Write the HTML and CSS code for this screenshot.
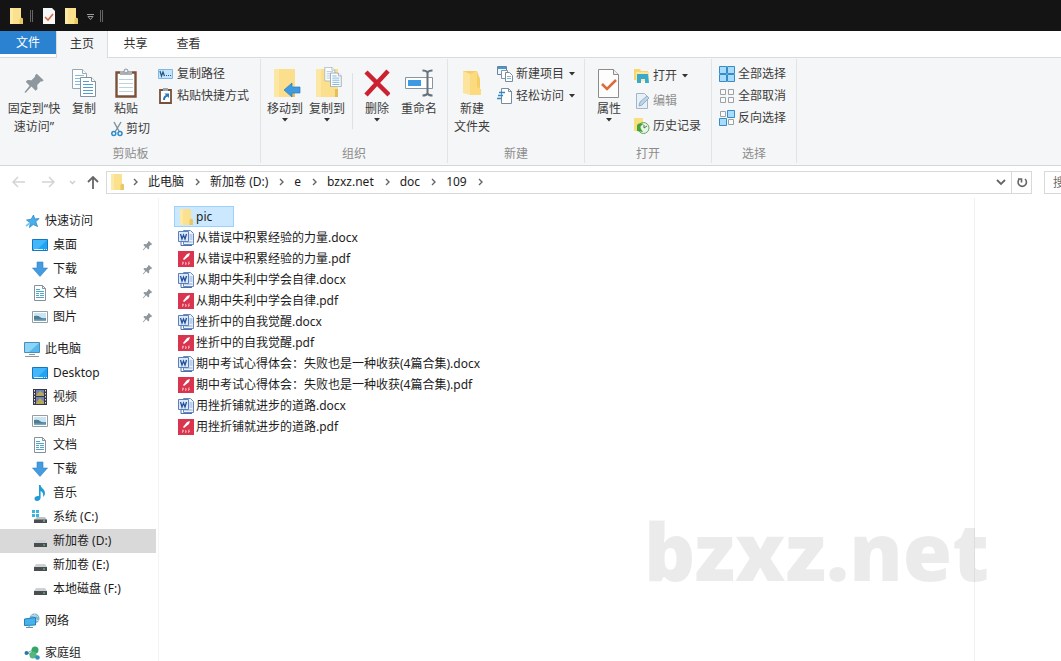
FILE: index.html
```html
<!DOCTYPE html>
<html lang="zh-CN">
<head>
<meta charset="utf-8">
<meta name="viewport" content="width=device-width, initial-scale=1">
<title>109</title>
<link rel="stylesheet" href="styles.css">
</head>
<body>
<svg class="sprite" aria-hidden="true">
  <symbol id="folder" viewBox="0 0 16 16"><path d="M2 0h11v10l1.500 1v5H2z" fill="#fbe18e"/><path d="M2 0h3v16H2z" fill="#fde9a6"/><path d="M11.500 11l1.500-1.500 2 1V16h-3.500z" fill="#e9c762"/></symbol>
  <symbol id="pin" viewBox="0 0 24 24"><path d="M15 2l7.500 7-2 1.500-1-.3-4 4 .3 4.300-2 2-4.600-4.600L3 22.500 1.500 22l5.700-7L3 10.700l2-2 4.300.3 4-4-.3-1.300z" fill="#8e979e"/></symbol>
  <symbol id="star" viewBox="0 0 16 16"><path d="M9.500 2l1.200 4 4.300-.5-3.200 3.300 1.700 4.700-4.300-2-3.700 3 .8-4.500-3.800-3 4.700-.7z" fill="#49aeea" stroke="#2789c7" stroke-width=".8"/><path d="M2 13l4-3" stroke="#7ac5ef" stroke-width="1.600"/></symbol>
  <symbol id="desk" viewBox="0 0 16 16"><path d="M.5 2.500h15v11H.5z" fill="#20a2f5" stroke="#1976bb"/><path d="M1 3h14L6 12H1z" fill="#43b7fb"/><path d="M2 12.500h9m1 0h1m1 0h1" stroke="#dff4ff"/></symbol>
  <symbol id="down" viewBox="0 0 16 16"><path d="M5 1h6v6h4.500L8 15.500.5 7H5z" fill="#449bdf" stroke="#3384c8" stroke-width=".6"/></symbol>
  <symbol id="doc" viewBox="0 0 16 16"><path d="M2.500.5h8l3 3v12h-11z" fill="#fff" stroke="#87929a"/><path d="M10.500.5v3h3" fill="none" stroke="#87929a"/><path d="M4 4.500h4M4 6.500h8M4 8.500h3m1 0h4M4 10.500h3m1 0h4M4 12.500h8" stroke="#4ba8ca"/></symbol>
  <symbol id="pic" viewBox="0 0 16 16"><path d="M.5 2.500h15v11H.5z" fill="#fff" stroke="#949da3"/><path d="M2 4h12v8H2z" fill="#c9e5f2"/><path d="M2 7q4-1 6 1t6 1v3H2z" fill="#4e7e94"/><path d="M2 10.500h12V12H2z" fill="#79a8bd"/></symbol>
  <symbol id="pc" viewBox="0 0 16 16"><path d="M.5 1.500h15v10H.5z" fill="#53b9ee" stroke="#488eb9"/><path d="M1 2h14L5 11H1z" fill="#8bd5f8"/><path d="M5 13.500h6M1 15.500h14" stroke="#8c989f"/></symbol>
  <symbol id="video" viewBox="0 0 16 16"><path d="M1 0h14v16H1z" fill="#363746"/><path d="M2.500 1v15M13.500 1v15" stroke="#e6e6e6" stroke-dasharray="1.500 1.500"/><path d="M4 1h8v6H4zM4 8h8v7H4z" fill="#7182b7"/><path d="M5 5l3-3 4 3v2H4zM4 14l4-5 4 4v2H4z" fill="#b8a85a"/></symbol>
  <symbol id="music" viewBox="0 0 16 16"><path d="M7 0h1.600c0 3 4.400 4 4.400 8 0 2-1 3-2 4 .8-3.500-.5-5-2.400-6v6.500c0 2-1.600 3.500-3.600 3.500-1.700 0-2.500-1-2.500-2.200 0-1.900 2.100-3.100 4.500-2.600z" fill="#209bd8"/></symbol>
  <symbol id="drive" viewBox="0 0 16 16"><path d="M4 7h9l2 3H2z" fill="#ced1d3"/><path d="M2 10h13v4H2z" fill="#4a4e50"/><path d="M11 12h2" stroke="#65d591"/></symbol>
  <symbol id="sys" viewBox="0 0 16 16"><path d="M0 1h3v3H0zm4 0h3v3H4zM0 5h3v3H0zm4 0h3v3H4z" fill="#38b6dd"/><path d="M5 8h8l2 3H2z" fill="#bec3c5"/><path d="M2 10.500h13V14H2z" fill="#4a4e50"/><path d="M11 12h2" stroke="#7de6e2"/></symbol>
  <symbol id="net" viewBox="0 0 16 16"><circle cx="10.500" cy="5.500" r="5" fill="#7fb3cd"/><path d="M7 2l4 1 1 4 3 1M10 1l4 3" stroke="#c2e2ef" fill="none"/><path d="M.5 6L11.500 4.500v7.500L.5 12.500z" fill="#48b2ed" stroke="#267fb5"/><path d="M5 12.500v2M2 14.500h7" stroke="#5699bd" fill="none"/></symbol>
  <symbol id="home" viewBox="0 0 16 16"><path d="M3 8l6-3 4 7z" fill="none" stroke="#6f9fa9"/><circle cx="2.500" cy="8" r="2" fill="#2877ab"/><circle cx="11" cy="5" r="3.500" fill="#34a66a"/><circle cx="9" cy="10" r="3.500" fill="#56b67c"/><circle cx="13.500" cy="12.500" r="2.300" fill="#2d91c1"/></symbol>
  <symbol id="word" viewBox="0 0 16 16"><path d="M5.500.5h7l3 3v11h-10z" fill="#e9f1fc" stroke="#6888b8"/><path d="M11.500 5h3m-3 2h3m-3 2h3m-8 3h8" stroke="#8fabd6"/><path d="M.5 1.500h10v10H.5z" fill="#dce9fa" stroke="#5a7fba"/><path d="M2.500 4l1.500 5 1.500-4L7 9l1.500-5" fill="none" stroke="#214e9b" stroke-width="1.300"/><path d="M3 12v3.500h11" fill="none" stroke="#4d70ad"/></symbol>
  <symbol id="pdf" viewBox="0 0 16 16"><path d="M0 0h16v16H0z" fill="#d9354f"/><path d="M5 8l4-5 3-1-1 3-5 4z" fill="#fff"/><path d="M4.500 14v-3h1v1.500h-1M7.500 11v3q2-1.500 0-3M10.500 14v-3h1.500m-1.500 1.500H12" fill="none" stroke="#f7a9b5" stroke-width=".8"/></symbol>
  <symbol id="prop" viewBox="0 0 24 32"><path d="M1.500 2.500h15l5 5v23h-20z" fill="#fdfdfd" stroke="#8c8c8c"/><path d="M16.500 2.500v5h5" fill="#eee" stroke="#8c8c8c"/><path d="M5 17l5 5 9-9" fill="none" stroke="#dc6b3c" stroke-width="2.600"/></symbol>
  <symbol id="copy" viewBox="0 0 24 28"><g fill="#fff" stroke="#98a7b2"><path d="M.5.5h10l4 4v15H.5z"/><path d="M10.500.5v4h4"/></g><path d="M3 6.500h9m-9 3h9m-9 3h9m-9 3h9" stroke="#86b9dc"/><g fill="#fff" stroke="#8193a0"><path d="M8.500 8.500h11l4 4v15h-15z"/><path d="M19.500 8.500v4h4"/></g><path d="M11 12.500h6m-6 3h10m-10 3h10m-10 3h10m-10 3h10" stroke="#4f9dd1"/></symbol>
  <symbol id="tri" viewBox="0 0 6 4"><path d="M0 0h6L3 3.500z" fill="#333"/></symbol>
  <symbol id="chev" viewBox="0 0 6 8"><path d="M1 1l3 3-3 3" fill="none" stroke="#666" stroke-width="1.400"/></symbol>
</svg>

<header class="titlebar">
  <svg class="i16"><use href="#folder"/></svg>
  <span class="tick"></span>
  <button class="quick" aria-label="属性"><svg width="12" height="16" viewBox="0 0 12 16"><path d="M0 0h9l3 3v13H0z" fill="#f7f7f7"/><path d="M2 9l3 3 5-6" fill="none" stroke="#d8683c" stroke-width="1.600"/></svg></button>
  <button class="quick" aria-label="新建文件夹"><svg class="i16"><use href="#folder"/></svg></button>
  <button class="quick" aria-label="自定义快速访问工具栏"><svg class="custom" width="7" height="6" viewBox="0 0 7 6"><path d="M0 .5h7M1 2.500h5l-2.500 3z" fill="none" stroke="#aaa" stroke-width=".9"/></svg></button>
  <span class="tick"></span>
</header>

<nav class="tabs" aria-label="功能区">
  <button class="tab tab-file">文件</button>
  <button class="tab tab-active">主页</button>
  <button class="tab">共享</button>
  <button class="tab">查看</button>
</nav>

<section class="ribbon">
  <div class="group g-clip">
    <div class="tools">
      <button class="big wide"><span class="art"><svg width="22" height="22"><use href="#pin"/></svg></span>固定到“快<br>速访问”</button>
      <button class="big narrow"><span class="art"><svg width="24" height="28"><use href="#copy"/></svg></span>复制</button>
      <div class="paste-col">
        <button class="big"><span class="art"><svg width="22" height="30" viewBox="0 0 22 30"><path d="M1.500 4.500h19v24h-19z" fill="#fff" stroke="#7c5138" stroke-width="2.400"/><path d="M5 3h12v4H5z" fill="#aab2b7"/><circle cx="11" cy="3" r="2" fill="#eee" stroke="#8c969d"/><path d="M4 11.500h14m-14 4h14m-14 4h14m-14 4h14" stroke="#b9d3e3"/></svg></span>粘贴</button>
        <button class="small cut"><svg width="12" height="16" viewBox="0 0 12 16"><path d="M3 1l5.500 10M10 1L4 11" stroke="#7e8f9c" stroke-width="1.400"/><circle cx="2.800" cy="12.500" r="2" fill="none" stroke="#2f8bc9" stroke-width="1.500"/><circle cx="9" cy="12.500" r="2" fill="none" stroke="#2f8bc9" stroke-width="1.500"/></svg>剪切</button>
      </div>
      <div class="stack">
        <button class="small"><svg class="i16" viewBox="0 0 16 16"><path d="M.5 3.500h14v9H.5z" fill="#c5e3fa" stroke="#7fb8e3"/><path d="M2 5l1.500 5L5 6l1.500 4M8 9.500h1m1 0h1m1 0h1" fill="none" stroke="#23567d" stroke-width="1.200"/></svg>复制路径</button>
        <button class="small"><svg class="i16" viewBox="0 0 16 16"><path d="M2 2h11v13H2z" fill="#fff" stroke="#76503b" stroke-width="1.800"/><path d="M5 0h5v3H5z" fill="#9ba4aa"/><path d="M5 12q0-4 3-5L6.500 5.500H11V10L9.500 8.500Q7 9 7 12z" fill="#2879b9"/></svg>粘贴快捷方式</button>
      </div>
    </div>
    <h2 class="caption">剪贴板</h2>
  </div>

  <div class="group g-org">
    <div class="tools">
      <button class="big"><span class="art"><svg width="32" height="32" viewBox="0 0 32 32"><path d="M5 2h21v28H5z" fill="#fbdf8d"/><path d="M5 2h5v28H5z" fill="#fde7a4"/><path d="M23 22h3v8h-3z" fill="#e5bf5a"/><path d="M15 23l8-7v4h8v6h-8v4z" fill="#3c9be1" stroke="#2b7db9" stroke-width=".7"/></svg></span>移动到<svg class="arrow"><use href="#tri"/></svg></button>
      <button class="big"><span class="art"><svg width="32" height="32" viewBox="0 0 32 32"><path d="M5 2h22v28H5z" fill="#fbdf8d"/><path d="M5 2h5v28H5z" fill="#fde7a4"/><path d="M24 22h3v8h-3z" fill="#e5bf5a"/><svg x="13" y="0" width="18" height="20"><use href="#copy"/></svg></svg></span>复制到<svg class="arrow"><use href="#tri"/></svg></button>
      <span class="rule"></span>
      <button class="big"><span class="art"><svg width="26" height="28" viewBox="0 0 26 28"><path d="M2 3l23 23M24 2L2 26" stroke="#cc2131" stroke-width="4.500"/></svg></span>删除<svg class="arrow"><use href="#tri"/></svg></button>
      <button class="big"><span class="art"><svg width="30" height="30" viewBox="0 0 30 30"><path d="M1.500 9.500h27v11h-27z" fill="#fff" stroke="#8796a3"/><path d="M4 12h13v6H4z" fill="#3d9ae2"/><path d="M18.500 2.500q4 0 5 2 1-2 5-2M23.500 4v22M18.500 27.500q4 0 5-2 1 2 5 2" fill="none" stroke="#66727b" stroke-width="2"/></svg></span>重命名</button>
    </div>
    <h2 class="caption">组织</h2>
  </div>

  <div class="group g-new">
    <div class="tools">
      <button class="big"><span class="art"><svg width="20" height="28" viewBox="0 0 20 28"><path d="M1 2h14l3 8v15H7z" fill="#f7ce64"/><path d="M1 2l7 3v21l-7-2z" fill="#fde49d"/><path d="M8 5l7-3v16l4 2v6H8z" fill="#fbda80"/></svg></span>新建<br>文件夹</button>
      <div class="stack">
        <button class="small"><svg class="i16" viewBox="0 0 16 16"><path d="M.5.5h9v8h-9z" fill="#edf6fc" stroke="#6c8294"/><path d="M1 2h8" stroke="#4399d2" stroke-width="2"/><path d="M4.500 4.500h6v8h-6z" fill="#fff" stroke="#8495a3"/><path d="M8.500 6.500h4l3 3v6h-7z" fill="#fff" stroke="#788a98"/><path d="M10 10.500h4m-4 2h4" stroke="#7eb5db"/></svg>新建项目<svg class="arrow side"><use href="#tri"/></svg></button>
        <button class="small"><svg class="i16" viewBox="0 0 16 16"><path d="M4.500.5h7l3 3v12h-10z" fill="#fff" stroke="#7d8b96"/><path d="M11.500.5v3h3" fill="none" stroke="#7d8b96"/><path d="M2 4.500h6M1 7.500h5M0 10.500h4" stroke="#2e8bc8" stroke-width="1.300"/></svg>轻松访问<svg class="arrow side"><use href="#tri"/></svg></button>
      </div>
    </div>
    <h2 class="caption">新建</h2>
  </div>

  <div class="group g-open">
    <div class="tools">
      <button class="big"><span class="art"><svg width="24" height="32"><use href="#prop"/></svg></span>属性<svg class="arrow"><use href="#tri"/></svg></button>
      <div class="stack loose">
        <button class="small"><svg class="i16" viewBox="0 0 16 16"><path d="M0 1h6l1 2h7v9H0z" fill="#f7d66f"/><path d="M2 4h13v9H2z" fill="#fce79d"/><path d="M3 6h11l1 9h-4v-4H7v4H3z" fill="#39aacb"/></svg>打开<svg class="arrow side"><use href="#tri"/></svg></button>
        <button class="small" disabled><svg class="i16" viewBox="0 0 16 16"><path d="M2.500.5h8l3 3v12h-11z" fill="#e8f0f7" stroke="#a4b5c5"/><path d="M5 13l1-4 7-6 2 2-7 7z" fill="#bdd4e6" stroke="#91aec8"/></svg>编辑</button>
        <button class="small"><svg class="i16" viewBox="0 0 16 16"><path d="M0 0h9v13H0z" fill="#f9df7e"/><circle cx="9.500" cy="10" r="5.500" fill="#e8f3e6" stroke="#65a75b"/><path d="M3 7v6l6 1-2-3q-2-3 3-5Q5 4 3 7z" fill="#42a43b"/><path d="M10 7v3l3-2" fill="none" stroke="#577061"/></svg>历史记录</button>
      </div>
    </div>
    <h2 class="caption">打开</h2>
  </div>

  <div class="group g-sel">
    <div class="tools">
      <div class="stack">
        <button class="small"><svg class="i16" viewBox="0 0 16 16"><path d="M.5.500h7v7h-7zm8 0h7v7h-7zm-8 8h7v7h-7zm8 0h7v7h-7z" fill="#a9dcfb" stroke="#378cc8"/></svg>全部选择</button>
        <button class="small"><svg class="i16" viewBox="0 0 16 16"><path d="M1.500 1.500h5v5h-5zm8 0h5v5h-5zm-8 8h5v5h-5zm8 0h5v5h-5z" fill="#fafafa" stroke="#9ca1a5"/></svg>全部取消</button>
        <button class="small"><svg class="i16" viewBox="0 0 16 16"><path d="M8.500.5h7v7h-7zm-8 8h7v7h-7z" fill="#a9dcfb" stroke="#378cc8"/><path d="M1.500 1.500h5v5h-5zm8 8h5v5h-5z" fill="#fafafa" stroke="#9ca1a5"/></svg>反向选择</button>
      </div>
    </div>
    <h2 class="caption">选择</h2>
  </div>
</section>

<div class="location">
  <div class="history">
    <button aria-label="后退" disabled><svg width="14" height="12" viewBox="0 0 14 12"><path d="M13 6H1m5-5L1 6l5 5" fill="none" stroke="#d3d3d3" stroke-width="1.500"/></svg></button>
    <button aria-label="前进" disabled><svg width="14" height="12" viewBox="0 0 14 12"><path d="M1 6h12M8 1l5 5-5 5" fill="none" stroke="#d3d3d3" stroke-width="1.500"/></svg></button>
    <button class="recent" aria-label="最近浏览的位置"><svg width="7" height="5" viewBox="0 0 7 5"><path d="M1 1l2.500 2.500L6 1" fill="none" stroke="#ccc" stroke-width="1.300"/></svg></button>
    <button class="up" aria-label="上移"><svg width="12" height="13" viewBox="0 0 12 13"><path d="M6 13V1M1 6l5-5 5 5" fill="none" stroke="#666" stroke-width="1.800"/></svg></button>
  </div>
  <nav class="address" aria-label="地址">
    <svg class="i16"><use href="#folder"/></svg>
    <svg class="chev"><use href="#chev"/></svg><a href="#pc">此电脑</a>
    <svg class="chev"><use href="#chev"/></svg><a href="#d">新加卷 (D:)</a>
    <svg class="chev"><use href="#chev"/></svg><a href="#e">e</a>
    <svg class="chev"><use href="#chev"/></svg><a href="#b">bzxz.net</a>
    <svg class="chev"><use href="#chev"/></svg><a href="#doc">doc</a>
    <svg class="chev"><use href="#chev"/></svg><a href="#109">109</a>
    <svg class="chev"><use href="#chev"/></svg>
    <button class="drop" aria-label="展开地址"><svg width="10" height="7" viewBox="0 0 10 7"><path d="M1 1l4 4 4-4" fill="none" stroke="#666" stroke-width="1.800"/></svg></button>
    <button class="reload" aria-label="刷新"><svg width="12" height="12" viewBox="0 0 12 12"><path d="M9 3a4.200 4.200 0 1 1-5.500 0M2 3h3.500v3.500" fill="none" stroke="#666" stroke-width="1.600"/></svg></button>
  </nav>
  <input class="search" type="text" aria-label="搜索" placeholder="搜索">
</div>

<main class="panes">
  <nav class="tree" aria-label="导航窗格">
    <ul>
      <li><a class="node" href="#q"><svg class="i16"><use href="#star"/></svg>快速访问</a></li>
      <li><a class="node sub" href="#q1"><svg class="i16"><use href="#desk"/></svg>桌面<svg class="pinned"><use href="#pin"/></svg></a></li>
      <li><a class="node sub" href="#q2"><svg class="i16"><use href="#down"/></svg>下载<svg class="pinned"><use href="#pin"/></svg></a></li>
      <li><a class="node sub" href="#q3"><svg class="i16"><use href="#doc"/></svg>文档<svg class="pinned"><use href="#pin"/></svg></a></li>
      <li><a class="node sub" href="#q4"><svg class="i16"><use href="#pic"/></svg>图片<svg class="pinned"><use href="#pin"/></svg></a></li>
    </ul>
    <ul>
      <li><a class="node" href="#p"><svg class="i16"><use href="#pc"/></svg>此电脑</a></li>
      <li><a class="node sub" href="#p1"><svg class="i16"><use href="#desk"/></svg>Desktop</a></li>
      <li><a class="node sub" href="#p2"><svg class="i16"><use href="#video"/></svg>视频</a></li>
      <li><a class="node sub" href="#p3"><svg class="i16"><use href="#pic"/></svg>图片</a></li>
      <li><a class="node sub" href="#p4"><svg class="i16"><use href="#doc"/></svg>文档</a></li>
      <li><a class="node sub" href="#p5"><svg class="i16"><use href="#down"/></svg>下载</a></li>
      <li><a class="node sub" href="#p6"><svg class="i16"><use href="#music"/></svg>音乐</a></li>
      <li><a class="node sub" href="#p7"><svg class="i16"><use href="#sys"/></svg>系统 (C:)</a></li>
      <li><a class="node sub current" href="#p8"><svg class="i16"><use href="#drive"/></svg>新加卷 (D:)</a></li>
      <li><a class="node sub" href="#p9"><svg class="i16"><use href="#drive"/></svg>新加卷 (E:)</a></li>
      <li><a class="node sub" href="#p10"><svg class="i16"><use href="#drive"/></svg>本地磁盘 (F:)</a></li>
    </ul>
    <ul><li><a class="node" href="#n"><svg class="i16"><use href="#net"/></svg>网络</a></li></ul>
    <ul><li><a class="node" href="#h"><svg class="i16"><use href="#home"/></svg>家庭组</a></li></ul>
  </nav>

  <ul class="files">
    <li><a class="file selected" href="#f0"><svg class="i16"><use href="#folder"/></svg>pic</a></li>
    <li><a class="file" href="#f1"><svg class="i16"><use href="#word"/></svg>从错误中积累经验的力量.docx</a></li>
    <li><a class="file" href="#f2"><svg class="i16"><use href="#pdf"/></svg>从错误中积累经验的力量.pdf</a></li>
    <li><a class="file" href="#f3"><svg class="i16"><use href="#word"/></svg>从期中失利中学会自律.docx</a></li>
    <li><a class="file" href="#f4"><svg class="i16"><use href="#pdf"/></svg>从期中失利中学会自律.pdf</a></li>
    <li><a class="file" href="#f5"><svg class="i16"><use href="#word"/></svg>挫折中的自我觉醒.docx</a></li>
    <li><a class="file" href="#f6"><svg class="i16"><use href="#pdf"/></svg>挫折中的自我觉醒.pdf</a></li>
    <li><a class="file" href="#f7"><svg class="i16"><use href="#word"/></svg>期中考试心得体会：失败也是一种收获(4篇合集).docx</a></li>
    <li><a class="file" href="#f8"><svg class="i16"><use href="#pdf"/></svg>期中考试心得体会：失败也是一种收获(4篇合集).pdf</a></li>
    <li><a class="file" href="#f9"><svg class="i16"><use href="#word"/></svg>用挫折铺就进步的道路.docx</a></li>
    <li><a class="file" href="#f10"><svg class="i16"><use href="#pdf"/></svg>用挫折铺就进步的道路.pdf</a></li>
  </ul>
  <aside class="preview"></aside>
  <div class="watermark">bzxz.net</div>
</main>
</body>
</html>
```

FILE: styles.css
```css
* { box-sizing: border-box; }
body {
  margin: 0;
  height: 100vh;
  display: flex;
  flex-direction: column;
  overflow: hidden;
  background: #fff;
  color: #1c1c1c;
  font: 12px/18px "Noto Sans", "Noto Sans CJK SC", sans-serif;
}
button {
  margin: 0;
  padding: 0;
  border: 0;
  background: none;
  color: inherit;
  font: inherit;
}
a { color: inherit; text-decoration: none; }
ul { list-style: none; margin: 0; padding: 0; }
svg { display: block; flex: none; }
.sprite { position: absolute; width: 0; height: 0; }
.i16 { width: 16px; height: 16px; }

.titlebar {
  flex: none;
  height: 31px;
  padding-left: 8px;
  display: flex;
  align-items: center;
  gap: 6px;
  background: #141414;
}
.tick { width: 3px; height: 12px; margin-right: 4px; border: solid #666; border-width: 0 1px; }
.quick + .quick { margin-left: 2px; }
.custom { margin-top: 3px; }

.tabs {
  flex: none;
  height: 27px;
  display: flex;
  border-bottom: 1px solid #dadbdc;
  color: #333;
}
.tab { width: 53px; height: 25px; }
.tab-file { width: 56px; height: 23px; background: #2a82d0; color: #fff; }
.tab-active {
  width: 52px;
  height: 27px;
  margin-right: 1px;
  padding-bottom: 2px;
  border: solid #dadbdc;
  border-width: 0 1px;
  background: #f5f6f7;
}

.ribbon {
  flex: none;
  height: 108px;
  display: flex;
  background: #f5f6f7;
  border-bottom: 1px solid #d5d6d7;
  color: #3c3c3c;
  white-space: nowrap;
}
.group {
  display: flex;
  flex-direction: column;
  justify-content: space-between;
  margin: 1px 0 2px;
  padding: 4px 3px 0;
  border-right: 1px solid #e2e3e4;
}
.g-clip { width: 261px; padding-left: 4px; }
.g-org { width: 187px; }
.g-new { width: 137px; }
.g-open { width: 127px; }
.g-sel { width: 85px; }
.tools { display: flex; }
.caption {
  margin: 0;
  font-size: 12px;
  font-weight: 400;
  line-height: 18px;
  text-align: center;
  color: #8c8c8c;
}
.big {
  width: 42px;
  padding-top: 2px;
  display: flex;
  flex-direction: column;
  align-items: center;
  align-self: flex-start;
}
.big.wide { width: 60px; }
.big.narrow { width: 40px; }
.art { height: 35px; display: flex; align-items: center; }
.arrow { width: 6px; height: 4px; }
.arrow.side { margin-left: 2px; }
.paste-col { width: 50px; padding-left: 1px; }
.cut { margin-left: 6px; }
.small { height: 22px; display: flex; align-items: center; gap: 3px; }
.small:disabled { color: #8f8f8f; }
.stack { margin-left: 4px; }
.loose .small { height: 25px; }
.rule { width: 1px; height: 56px; margin: 10px 3px 0 4px; background: #e0e1e2; }

.location {
  flex: none;
  height: 32px;
  display: flex;
  align-items: center;
}
.history { width: 106px; padding-left: 12px; display: flex; align-items: center; }
.history button + button { margin-left: 15px; }
.history .recent { margin-left: 14px; }
.history .up { margin-left: 11px; }
.address {
  flex: 1;
  height: 23px;
  padding-left: 2px;
  display: flex;
  align-items: center;
  border: 1px solid #d9d9d9;
}
.chev { width: 6px; height: 8px; margin: 0 9px 0 11px; }
.address .i16 + .chev { margin-left: 8px; }
.drop { width: 20px; margin-left: auto; display: flex; justify-content: center; }
.reload {
  width: 20px;
  height: 21px;
  display: flex;
  align-items: center;
  justify-content: center;
  border-left: 1px solid #d9d9d9;
}
.search {
  width: 17px;
  height: 23px;
  margin-left: 12px;
  padding: 0 0 0 8px;
  border: solid #d9d9d9;
  border-width: 1px 0 1px 1px;
  border-radius: 0;
  background: #fff;
  font: inherit;
}
.search::placeholder { color: #6d6d6d; }

.panes {
  flex: 1;
  min-height: 0;
  position: relative;
  display: flex;
}
.tree {
  width: 159px;
  padding: 11px 2px 0 0;
  border-right: 1px solid #f3f3f3;
}
.tree ul + ul { margin-top: 8px; }
.node {
  height: 24px;
  padding-left: 24px;
  display: flex;
  align-items: center;
  gap: 5px;
}
.sub { padding-left: 32px; }
.current { background: #d9d9d9; }
.pinned { width: 11px; height: 11px; margin: 0 3px 0 auto; }

.files { flex: 1; padding: 8px 0 0 15px; }
.files li { display: flex; }
.file {
  height: 21px;
  padding: 0 3px;
  display: flex;
  align-items: center;
  gap: 2px;
  border: 1px solid transparent;
}
.selected { width: 60px; background: #cce8ff; border-color: #99d1ff; }
.preview { width: 87px; border-left: 1px solid #f0f0f0; }
.watermark {
  position: absolute;
  right: 72px;
  bottom: 56px;
  color: rgba(0, 0, 0, 0.08);
  font: 900 80px/110px "Noto Sans", "Open Sans", sans-serif;
}
```
